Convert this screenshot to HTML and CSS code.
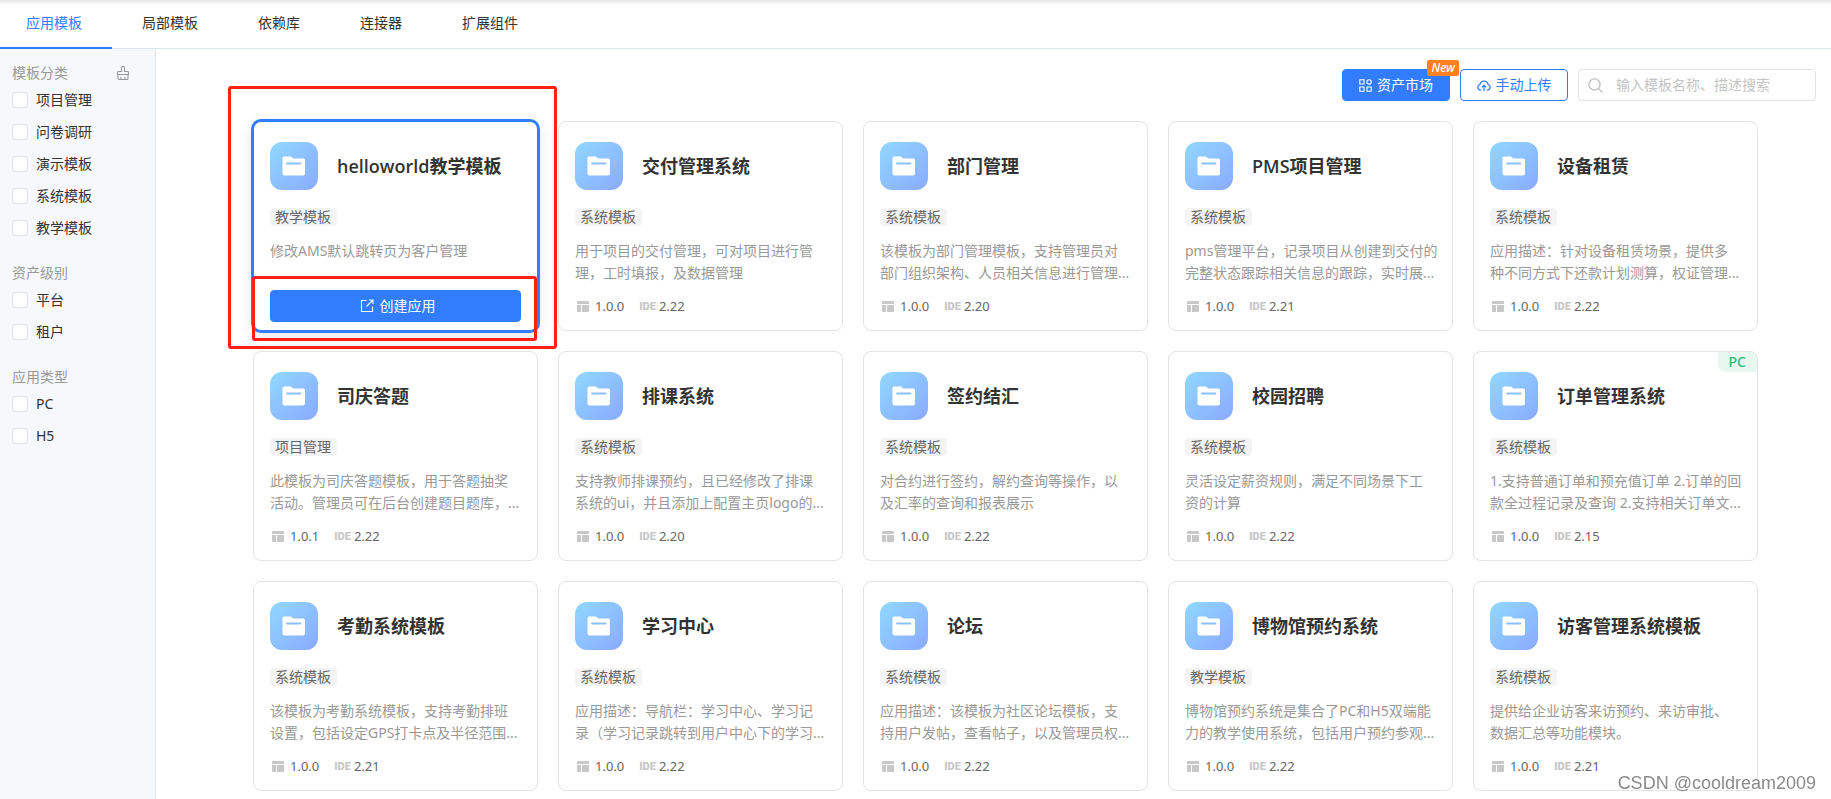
FILE: index.html
```html
<!DOCTYPE html>
<html lang="zh-CN">
<head>
<meta charset="utf-8">
<title>应用模板</title>
<link rel="stylesheet" href="styles.css">
</head>
<body>
<svg class="defs" aria-hidden="true">
  <symbol id="folder" viewBox="0 0 24 20">
    <path fill="#fff" d="M2 0.500h6.500a1.500 1.500 0 0 1 1.200.6L11 2.500h10.500A1.500 1.500 0 0 1 23 4v13.500a2 2 0 0 1-2 2H2.500a2 2 0 0 1-2-2V2A1.500 1.500 0 0 1 2 .5z"/>
    <path stroke="#8bc0ff" stroke-width="1.800" stroke-linecap="round" d="M5 7.500h13.500"/>
  </symbol>
  <symbol id="layout" viewBox="0 0 12 11">
    <path fill="#c8c8c8" d="M0 1a1 1 0 0 1 1-1h10a1 1 0 0 1 1 1v2H0zM0 4h4v7H1a1 1 0 0 1-1-1zM5 4h7v6a1 1 0 0 1-1 1H5z"/>
  </symbol>
</svg>

<nav class="tabs">
  <a class="tab active" href="#">应用模板</a>
  <a class="tab" href="#">局部模板</a>
  <a class="tab" href="#">依赖库</a>
  <a class="tab" href="#">连接器</a>
  <a class="tab" href="#">扩展组件</a>
</nav>

<div class="layout">
  <aside class="sidebar">
    <section class="group">
      <div class="group-head"><h2>模板分类</h2>
        <button class="clear" type="button" aria-label="清空">
          <svg width="12" height="14" viewBox="0 0 12 14" fill="none" stroke="#999" stroke-width="1.100"><path d="M4.500 5.500V1.500a1 1 0 0 1 1-1h1a1 1 0 0 1 1 1v4H10.500a1 1 0 0 1 1 1V8.500H.5V6.500a1 1 0 0 1 1-1zM1 8.500v4a1 1 0 0 0 1 1h8a1 1 0 0 0 1-1v-4M4 13.500V11M8 13.500V11"/></svg>
        </button>
      </div>
      <label class="check"><input type="checkbox">项目管理</label>
      <label class="check"><input type="checkbox">问卷调研</label>
      <label class="check"><input type="checkbox">演示模板</label>
      <label class="check"><input type="checkbox">系统模板</label>
      <label class="check"><input type="checkbox">教学模板</label>
    </section>
    <section class="group">
      <div class="group-head"><h2>资产级别</h2></div>
      <label class="check"><input type="checkbox">平台</label>
      <label class="check"><input type="checkbox">租户</label>
    </section>
    <section class="group">
      <div class="group-head"><h2>应用类型</h2></div>
      <label class="check"><input type="checkbox">PC</label>
      <label class="check"><input type="checkbox">H5</label>
    </section>
  </aside>

  <main class="main">
    <div class="toolbar">
      <button class="btn primary market" type="button">
        <svg width="13" height="13" viewBox="0 0 13 13" fill="none" stroke="#fff" stroke-width="1.100"><path d="M.8.8h4.200v4.200H.8zM.8 8h4.200v4.200H.8zM8 8h4.200v4.200H8z"/><circle cx="10.100" cy="2.900" r="2.200"/></svg>
        资产市场
        <span class="new">New</span>
      </button>
      <button class="btn outline" type="button">
        <svg width="14" height="13" viewBox="0 0 14 13" fill="none" stroke="#327dff" stroke-width="1.200"><path d="M4.500 11H3.600A2.900 2.900 0 0 1 3 5.300a4.100 4.100 0 0 1 8 0 2.900 2.900 0 0 1-.6 5.700H9.500M7 12V6.200M4.800 8.300L7 6.100l2.200 2.200"/></svg>
        手动上传
      </button>
      <div class="search">
        <svg width="15" height="15" viewBox="0 0 15 15" fill="none" stroke="#bfbfbf" stroke-width="1.300"><circle cx="6.500" cy="6.500" r="5.600"/><path d="M10.500 10.500l3.700 3.700"/></svg>
        <input type="text" placeholder="输入模板名称、描述搜索" aria-label="搜索模板">
      </div>
    </div>

    <div class="grid">
      <article class="card selected">
        <header class="card-head"><span class="icon"><svg><use href="#folder"/></svg></span><h3>helloworld教学模板</h3></header>
        <span class="tag">教学模板</span>
        <p class="desc">修改AMS默认跳转页为客户管理</p>
        <footer class="foot">
          <button class="btn primary create" type="button">
            <svg width="14" height="14" viewBox="0 0 14 14" fill="none" stroke="#fff" stroke-width="1.100"><path d="M6.500 1.500H1.500v11h11V7.500M9 1h4v4M13 1L6.500 7.500"/></svg>
            创建应用
          </button>
        </footer>
        <span class="mark mark-card"></span>
        <span class="mark mark-button"></span>
      </article>
      <article class="card">
        <header class="card-head"><span class="icon"><svg><use href="#folder"/></svg></span><h3>交付管理系统</h3></header>
        <span class="tag">系统模板</span>
        <p class="desc">用于项目的交付管理，可对项目进行管理，工时填报，及数据管理</p>
        <footer class="foot"><svg><use href="#layout"/></svg><span class="ver">1.0.0</span><b>IDE</b><span>2.22</span></footer>
      </article>
      <article class="card">
        <header class="card-head"><span class="icon"><svg><use href="#folder"/></svg></span><h3>部门管理</h3></header>
        <span class="tag">系统模板</span>
        <p class="desc">该模板为部门管理模板，支持管理员对部门组织架构、人员相关信息进行管理...</p>
        <footer class="foot"><svg><use href="#layout"/></svg><span class="ver">1.0.0</span><b>IDE</b><span>2.20</span></footer>
      </article>
      <article class="card">
        <header class="card-head"><span class="icon"><svg><use href="#folder"/></svg></span><h3>PMS项目管理</h3></header>
        <span class="tag">系统模板</span>
        <p class="desc lines">pms管理平台，记录项目从创建到交付的<br>完整状态跟踪相关信息的跟踪，实时展...</p>
        <footer class="foot"><svg><use href="#layout"/></svg><span class="ver">1.0.0</span><b>IDE</b><span>2.21</span></footer>
      </article>
      <article class="card">
        <header class="card-head"><span class="icon"><svg><use href="#folder"/></svg></span><h3>设备租赁</h3></header>
        <span class="tag">系统模板</span>
        <p class="desc">应用描述：针对设备租赁场景，提供多种不同方式下还款计划测算，权证管理...</p>
        <footer class="foot"><svg><use href="#layout"/></svg><span class="ver">1.0.0</span><b>IDE</b><span>2.22</span></footer>
      </article>
      <article class="card">
        <header class="card-head"><span class="icon"><svg><use href="#folder"/></svg></span><h3>司庆答题</h3></header>
        <span class="tag">项目管理</span>
        <p class="desc">此模板为司庆答题模板，用于答题抽奖活动。管理员可在后台创建题目题库，...</p>
        <footer class="foot"><svg><use href="#layout"/></svg><span class="ver">1.0.1</span><b>IDE</b><span>2.22</span></footer>
      </article>
      <article class="card">
        <header class="card-head"><span class="icon"><svg><use href="#folder"/></svg></span><h3>排课系统</h3></header>
        <span class="tag">系统模板</span>
        <p class="desc">支持教师排课预约，且已经修改了排课系统的ui，并且添加上配置主页logo的...</p>
        <footer class="foot"><svg><use href="#layout"/></svg><span class="ver">1.0.0</span><b>IDE</b><span>2.20</span></footer>
      </article>
      <article class="card">
        <header class="card-head"><span class="icon"><svg><use href="#folder"/></svg></span><h3>签约结汇</h3></header>
        <span class="tag">系统模板</span>
        <p class="desc">对合约进行签约，解约查询等操作，以及汇率的查询和报表展示</p>
        <footer class="foot"><svg><use href="#layout"/></svg><span class="ver">1.0.0</span><b>IDE</b><span>2.22</span></footer>
      </article>
      <article class="card">
        <header class="card-head"><span class="icon"><svg><use href="#folder"/></svg></span><h3>校园招聘</h3></header>
        <span class="tag">系统模板</span>
        <p class="desc">灵活设定薪资规则，满足不同场景下工资的计算</p>
        <footer class="foot"><svg><use href="#layout"/></svg><span class="ver">1.0.0</span><b>IDE</b><span>2.22</span></footer>
      </article>
      <article class="card">
        <span class="platform">PC</span>
        <header class="card-head"><span class="icon"><svg><use href="#folder"/></svg></span><h3>订单管理系统</h3></header>
        <span class="tag">系统模板</span>
        <p class="desc lines">1.支持普通订单和预充值订单 2.订单的回<br>款全过程记录及查询 2.支持相关订单文...</p>
        <footer class="foot"><svg><use href="#layout"/></svg><span class="ver">1.0.0</span><b>IDE</b><span>2.15</span></footer>
      </article>
      <article class="card">
        <header class="card-head"><span class="icon"><svg><use href="#folder"/></svg></span><h3>考勤系统模板</h3></header>
        <span class="tag">系统模板</span>
        <p class="desc">该模板为考勤系统模板，支持考勤排班设置，包括设定GPS打卡点及半径范围...</p>
        <footer class="foot"><svg><use href="#layout"/></svg><span class="ver">1.0.0</span><b>IDE</b><span>2.21</span></footer>
      </article>
      <article class="card">
        <header class="card-head"><span class="icon"><svg><use href="#folder"/></svg></span><h3>学习中心</h3></header>
        <span class="tag">系统模板</span>
        <p class="desc">应用描述：导航栏：学习中心、学习记录（学习记录跳转到用户中心下的学习...</p>
        <footer class="foot"><svg><use href="#layout"/></svg><span class="ver">1.0.0</span><b>IDE</b><span>2.22</span></footer>
      </article>
      <article class="card">
        <header class="card-head"><span class="icon"><svg><use href="#folder"/></svg></span><h3>论坛</h3></header>
        <span class="tag">系统模板</span>
        <p class="desc">应用描述：该模板为社区论坛模板，支持用户发帖，查看帖子，以及管理员权...</p>
        <footer class="foot"><svg><use href="#layout"/></svg><span class="ver">1.0.0</span><b>IDE</b><span>2.22</span></footer>
      </article>
      <article class="card">
        <header class="card-head"><span class="icon"><svg><use href="#folder"/></svg></span><h3>博物馆预约系统</h3></header>
        <span class="tag">教学模板</span>
        <p class="desc">博物馆预约系统是集合了PC和H5双端能力的教学使用系统，包括用户预约参观...</p>
        <footer class="foot"><svg><use href="#layout"/></svg><span class="ver">1.0.0</span><b>IDE</b><span>2.22</span></footer>
      </article>
      <article class="card">
        <header class="card-head"><span class="icon"><svg><use href="#folder"/></svg></span><h3>访客管理系统模板</h3></header>
        <span class="tag">系统模板</span>
        <p class="desc">提供给企业访客来访预约、来访审批、数据汇总等功能模块。</p>
        <footer class="foot"><svg><use href="#layout"/></svg><span class="ver">1.0.0</span><b>IDE</b><span>2.21</span></footer>
      </article>
    </div>
  </main>
</div>
<div class="watermark">CSDN @cooldream2009</div>
</body>
</html>
```
FILE: styles.css
```css
* { box-sizing: border-box; }
html, body { height: 100%; }
body {
  margin: 0;
  display: flex;
  flex-direction: column;
  overflow: hidden;
  background: #fff;
  color: #333;
  font: 14px/22px "Noto Sans", "Noto Sans CJK SC", sans-serif;
}
h2, h3, p { margin: 0; }
button, input { font: inherit; }
.defs { display: none; }

.tabs {
  display: flex;
  flex: none;
  border-bottom: 1px solid #dbe3f0;
  background: linear-gradient(#e6e6e6, #fff 5px);
}
.tab {
  padding: 12px 30px 14px;
  line-height: 22px;
  color: #333;
  text-decoration: none;
}
.tab:first-child { padding-left: 26px; }
.tab.active {
  color: #327dff;
  box-shadow: inset 0 -1px #327dff, 0 1px #327dff;
}

.layout { display: flex; flex: 1; min-height: 0; }
.sidebar {
  flex: none;
  width: 156px;
  padding: 13px 12px;
  background: #f6f8fb;
  border-right: 1px solid #e4e7ea;
}
.group { margin-bottom: 18px; }
.group-head { display: flex; justify-content: space-between; align-items: center; padding-right: 14px; }
.group-head h2 { font-size: 14px; font-weight: 400; color: #999; line-height: 22px; }
.clear { display: flex; padding: 0; border: 0; background: none; }
.check { display: flex; align-items: center; gap: 8px; height: 32px; }
.check input {
  appearance: none;
  width: 16px;
  height: 16px;
  margin: 0;
  border: 1px solid #e3e3e3;
  border-radius: 3px;
  background: #fff;
}

.main { flex: 1; min-width: 0; padding: 20px 0 0 24px; overflow: hidden; }
.toolbar { display: flex; justify-content: flex-end; gap: 10px; padding-right: 15px; margin-bottom: 20px; }
.btn {
  display: flex;
  align-items: center;
  justify-content: center;
  gap: 5px;
  height: 32px;
  padding: 0 15px;
  border: 1px solid #327dff;
  border-radius: 4px;
  white-space: nowrap;
}
.primary { background: #327dff; color: #fff; }
.outline { background: #fff; color: #327dff; }
.market { position: relative; width: 108px; }
.new {
  position: absolute;
  top: -10px;
  right: -10px;
  padding: 0 4px;
  border-radius: 2px;
  background: #ff8022;
  font-size: 12px;
  line-height: 16px;
  font-weight: 500;
  font-style: italic;
}
.toolbar .outline { width: 108px; }
.search {
  display: flex;
  align-items: center;
  gap: 13px;
  width: 238px;
  height: 32px;
  padding: 0 9px;
  border: 1px solid #e3e3e3;
  border-radius: 4px;
}
.search svg { flex: none; }
.search input { flex: 1; min-width: 0; padding: 0; border: 0; outline: 0; background: none; }
.search input::placeholder { color: #c4c4c4; }

.grid {
  display: grid;
  grid-template-columns: repeat(auto-fill, 285px);
  justify-content: center;
  gap: 20px;
}
.card {
  position: relative;
  padding: 20px 16px 8px;
  border: 1px solid #e3e3e3;
  border-radius: 8px;
  background: #fff;
}
.selected {
  border-color: #327dff;
  box-shadow: 0 0 0 2px #327dff, 0 4px 16px rgba(0, 0, 0, .12);
}
.card-head { display: flex; align-items: center; gap: 19px; margin-bottom: 18px; }
.icon {
  display: flex;
  align-items: center;
  justify-content: center;
  width: 48px;
  height: 48px;
  border-radius: 12px;
  background: linear-gradient(135deg, #90d8ff, #8aaaff);
}
.icon svg { width: 24px; height: 20px; }
h3 { font: 600 18px/26px "Open Sans", "Noto Sans CJK SC", sans-serif; }
.tag {
  display: block;
  width: max-content;
  padding: 0 6px 0 5px;
  border-radius: 4px;
  background: #f4f4f4;
  color: #666;
  line-height: 18px;
}
.desc { height: 44px; margin: 14px 0 6px; color: #999; }
.lines { white-space: nowrap; }
.foot { display: flex; align-items: center; height: 32px; color: #666; font-size: 13px; }
.foot > svg { width: 12px; height: 11px; margin: 0 6px 0 2px; }
.foot .ver { margin-right: 15px; }
.foot b { margin: 2px 3px 0 0; color: #c8c8c8; font: 900 11px/22px Roboto, Arial, sans-serif; }
.create { flex: 1; gap: 6px; padding-left: 19px; font-size: 14px; }
.platform {
  position: absolute;
  top: 0;
  right: 0;
  padding: 0 11px;
  border-radius: 0 8px 0 8px;
  background: #e8f8f0;
  color: #2cbe76;
  font-weight: 500;
  line-height: 20px;
}

.mark { position: absolute; z-index: 1; border: 3px solid #ff2015; border-radius: 3px; pointer-events: none; }
.mark-card { inset: -36px -20px -19px -26px; }
.mark-button { inset: 154px 0 -11px -2px; }

.watermark {
  position: fixed;
  right: 15px;
  bottom: 4px;
  color: #8a8a8a;
  font: 18px/24px "Liberation Sans", Arial, sans-serif;
  text-shadow: 1px 1px #fff, -1px -1px #fff;
}
```
